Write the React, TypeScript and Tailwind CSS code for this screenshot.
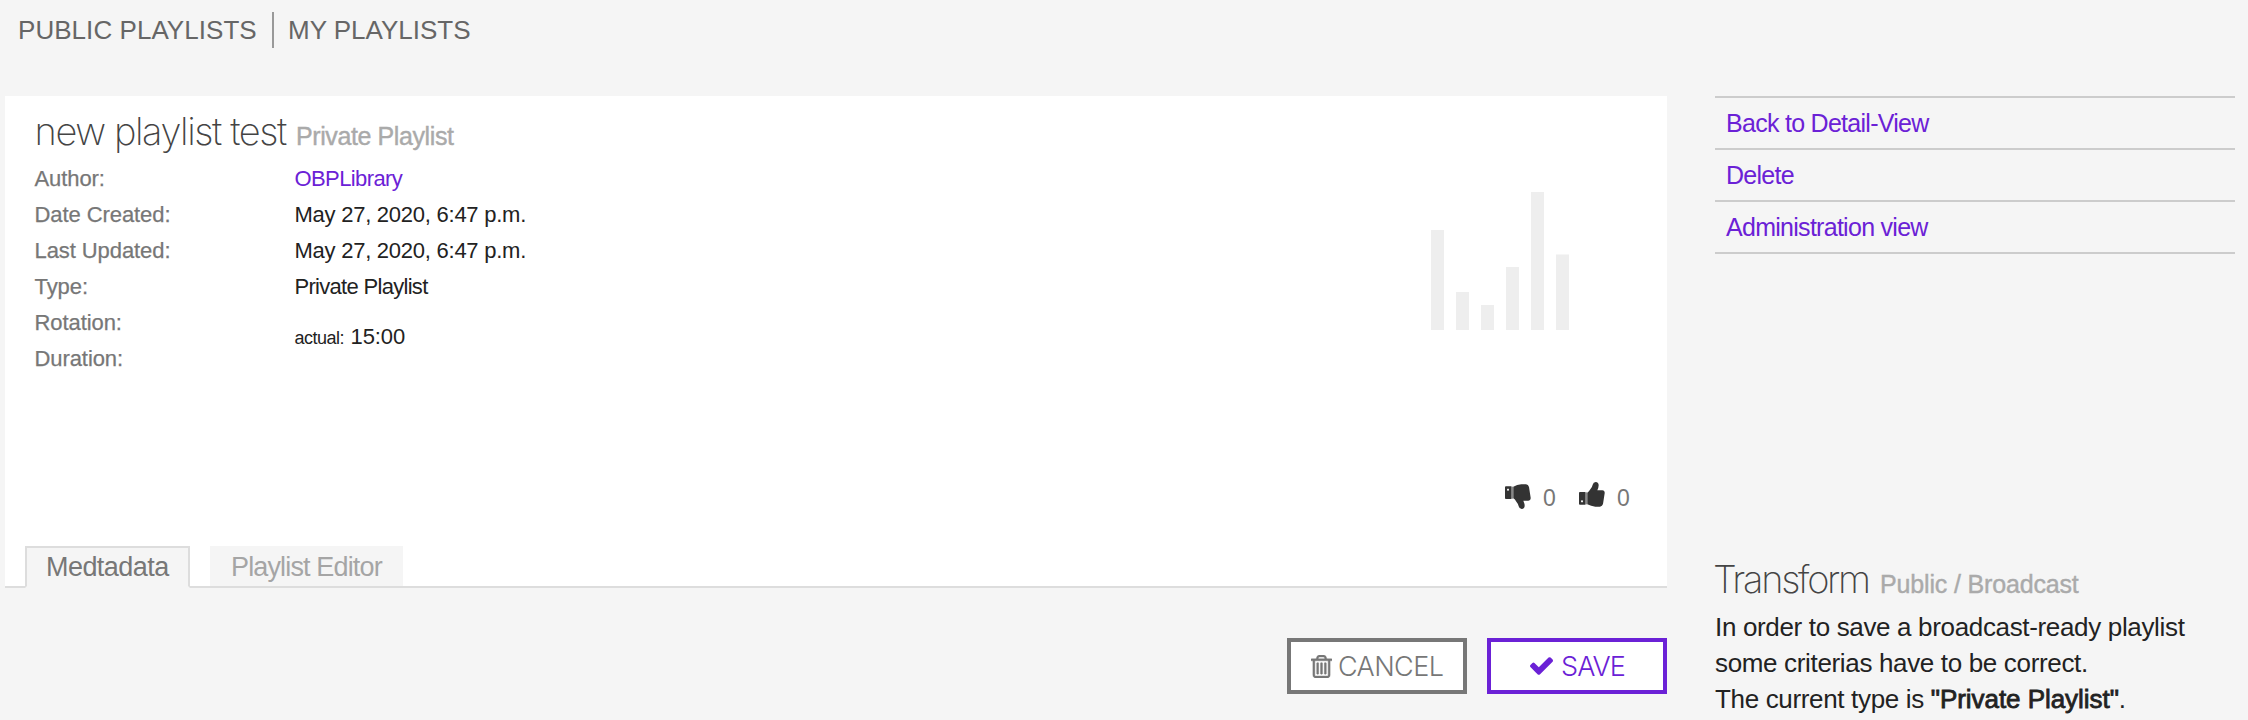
const labels = ['Author:', 'Date Created:', 'Last Updated:', 'Type:', 'Rotation:', 'Duration:'];

const links = ['Back to Detail-View', 'Delete', 'Administration view'];

function Thumb({ className }: { className?: string }) {
  return (
    <svg viewBox="0 0 78 75" className={className} fill="#333">
      <path
        fillRule="evenodd"
        d="M3 30h15q2 0 2 2v34q0 2-2 2H3q-3 0-3-2V32q0-2 3-2zM9 55a3 3 0 1 0 .1 0z"
      />
      <path d="M20 31h5v36h-5z" fill="#888" />
      <path d="M25 32q5-3 9-10q5-5 7-14Q43 0 50 0q9 1 9 10q0 6-4 15h15q8 1 7 9l-5 32q-2 7-9 8H49Q36 73 25 67z" />
    </svg>
  );
}

function Trash() {
  return (
    <svg viewBox="192 128 1408 1536" className="h-[23px] w-[21px]" fill="currentColor">
      <path
        fillRule="evenodd"
        d="M704 1376v-704q0-14-9-23t-23-9h-64q-14 0-23 9t-9 23v704q0 14 9 23t23 9h64q14 0 23-9t9-23zm256 0v-704q0-14-9-23t-23-9h-64q-14 0-23 9t-9 23v704q0 14 9 23t23 9h64q14 0 23-9t9-23zm256 0v-704q0-14-9-23t-23-9h-64q-14 0-23 9t-9 23v704q0 14 9 23t23 9h64q14 0 23-9t9-23zm128 84v-948h-896v948q0 22 7 40.5t14.5 27 10.5 8.5h832q3 0 10.5-8.5t14.5-27 7-40.5zm-672-1076h448l-48-117q-7-9-17-11h-317q-10 2-17 11zm928 32v64q0 14-9 23t-23 9h-96v948q0 83-47 143.5t-113 60.5h-832q-66 0-113-58.5t-47-141.5v-952h-96q-14 0-23-9t-9-23v-64q0-14 9-23t23-9h309l70-167q15-37 54-63t79-26h320q40 0 79 26t54 63l70 167h309q14 0 23 9t9 23z"
        stroke="currentColor"
        strokeWidth="30"
      />
    </svg>
  );
}

function Check() {
  return (
    <svg viewBox="121 334 1550 1188" className="h-[18px] w-[23px]" fill="currentColor">
      <path d="M1671 566q0 40-28 68l-724 724-136 136q-28 28-68 28t-68-28l-136-136-362-362q-28-28-28-68t28-68l136-136q28-28 68-28t68 28l294 295 656-657q28-28 68-28t68 28l136 136q28 28 28 68z" />
    </svg>
  );
}

export default function App() {
  return (
    <div className="flex h-[720px] w-[2248px] flex-col overflow-hidden bg-[#f5f5f5] font-['Liberation_Sans',Arial,sans-serif] text-[#222]">
      <nav className="flex h-24 items-start pt-3 pl-[18px] text-[26px] leading-9 text-[#666]">
        <a className="w-[254px] tracking-[0.05px]">PUBLIC PLAYLISTS</a>
        <span className="h-9 w-0.5 bg-[#999]" />
        <a className="ml-3.5">MY PLAYLISTS</a>
      </nav>

      <div className="flex items-start">
        <main className="ml-[5px] w-[1662px]">
          <section className="flex h-[492px] flex-col border-b-2 border-[#ddd] bg-white">
            <div className="flex h-[450px] shrink-0 justify-between pl-[29.500px]">
              <div>
                <h1 className="flex h-[65px] items-baseline pt-[11px]">
                  <span className="w-[261.500px] font-['Inter',sans-serif] text-[38px] leading-[48px] font-extralight tracking-[-1.4px] whitespace-nowrap text-[#444]">
                    new playlist test
                  </span>
                  <small className="text-[25px] leading-9 tracking-[-0.4px] text-[#aaa] [-webkit-text-stroke:0.4px_#aaa]">
                    Private Playlist
                  </small>
                </h1>
                <div className="flex text-[22px] leading-9">
                  <div className="w-[260px] tracking-[-0.08px] text-[#777] [-webkit-text-stroke:0.25px_#777]">
                    {labels.map((label) => (
                      <div key={label}>{label}</div>
                    ))}
                  </div>
                  <div>
                    <div className="tracking-[-0.6px] text-[#6b21d6]">OBPLibrary</div>
                    <div className="tracking-[-0.25px]">May 27, 2020, 6:47 p.m.</div>
                    <div className="tracking-[-0.25px]">May 27, 2020, 6:47 p.m.</div>
                    <div className="tracking-[-0.7px]">Private Playlist</div>
                    <div className="mt-3.5 flex items-baseline">
                      <span className="w-14 text-lg tracking-[-0.5px]">actual:</span>
                      <span className="tracking-[-0.1px]">15:00</span>
                    </div>
                  </div>
                </div>
              </div>
              <div className="flex w-[238px] flex-col">
                <svg viewBox="0 0 140 140" className="mt-24 h-[140px] w-[140px]" fill="#eee">
                  <path d="M2 38h13v100H2zM27 100h13v38H27zM52 113h13v25H52zM77 75h13v63H77zM102 0h13v138h-13zM127 62.500h13V138h-13z" />
                </svg>
                <div className="mt-[149px] flex pl-[76px] text-[23px] leading-[34px] text-[#777]">
                  <Thumb className="mt-[3px] h-[25px] w-[26px] -scale-y-100" />
                  <span className="ml-3 w-9">0</span>
                  <Thumb className="mt-px h-[25px] w-[26px]" />
                  <span className="ml-3">0</span>
                </div>
              </div>
            </div>
            <div className="flex h-10 shrink-0 items-start gap-5 pl-5 text-[27px]">
              <div className="h-[42px] w-[165px] border-2 border-[#ddd] border-b-[#f5f5f5] bg-[#f5f5f5] pl-[19px] leading-[38px] tracking-[-0.55px] text-[#777]">
                Medtadata
              </div>
              <div className="h-10 w-[193px] bg-[#f5f5f5] pl-[21px] leading-[42px] tracking-[-0.85px] text-[#a5a5a5]">
                Playlist Editor
              </div>
            </div>
          </section>
          <div className="mt-[50px] flex justify-end gap-5 font-['Inter',sans-serif] text-[27px] leading-[48px] font-light">
            <button className="flex h-14 w-[180px] items-center border-4 border-[#777] bg-white pl-5 text-[#777]">
              <Trash />
              <span className="mt-0.5 ml-1.5 tracking-[-0.6px]">CANCEL</span>
            </button>
            <button className="flex h-14 w-[180px] items-center border-4 border-[#6b21d6] bg-white pl-[39px] text-[#6b21d6]">
              <Check />
              <span className="mt-0.5 ml-2 tracking-[-0.9px]">SAVE</span>
            </button>
          </div>
        </main>

        <aside className="ml-12 w-[520px]">
          <ul className="h-[458px] text-[25px] text-[#6b21d6]">
            {links.map((l) => (
              <li key={l} className="h-[52px] border-t-2 border-[#ccc] pl-[11px] leading-[50px] tracking-[-0.72px] last:h-[54px] last:border-b-2">
                {l}
              </li>
            ))}
          </ul>
          <h2 className="flex h-[55px] items-baseline pt-px">
            <span className="-ml-0.5 w-[167px] font-['Inter',sans-serif] text-[38px] leading-[48px] font-extralight tracking-[-2.3px] whitespace-nowrap text-[#444]">
              Transform
            </span>
            <small className="text-[25px] leading-9 tracking-[-0.16px] text-[#aaa] [-webkit-text-stroke:0.4px_#aaa]">
              Public / Broadcast
            </small>
          </h2>
          <p className="text-[26px] leading-9 tracking-[-0.34px] whitespace-nowrap">
            In order to save a broadcast-ready playlist
            <br />
            some criterias have to be correct.
            <br />
            The current type is{' '}
            <b className="font-normal tracking-[-0.05px] [-webkit-text-stroke:0.8px_#222]">"Private Playlist"</b>.
          </p>
        </aside>
      </div>
    </div>
  );
}
